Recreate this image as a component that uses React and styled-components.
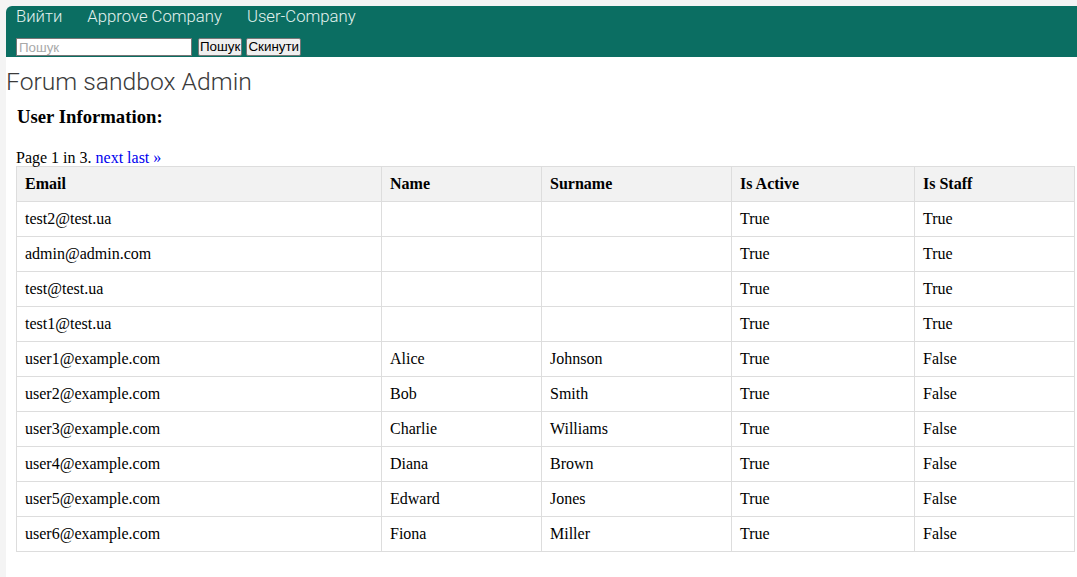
import React from "react";
import styled, { createGlobalStyle } from "styled-components";

const Global = createGlobalStyle`
  html, body { margin: 0; padding: 0; }
  body {
    background: #f4f4f4;
    font-family: "Liberation Serif", "Times New Roman", serif;
    color: #000;
  }
`;

const Page = styled.div`
  margin: 6px 0 0 6px;
  min-height: 571px;
  background: #fff;
  border-top-left-radius: 6px;
  overflow: hidden;
`;

const Header = styled.header`
  background: #0b6e62;
  padding: 0 10px 1px;
`;

const Nav = styled.nav`
  display: flex;
  gap: 25px;
  height: 31px;
  align-items: flex-start;
  padding-top: 1px;
`;

const NavLink = styled.a`
  font-family: Roboto, "Liberation Sans", sans-serif;
  font-size: 16.7px;
  font-weight: 300;
  line-height: 20px;
  color: #e3f2ef;
  text-decoration: none;
`;

const SearchRow = styled.form`
  display: flex;
  align-items: center;
  height: 18px;
  margin: 0;
`;

const SearchInput = styled.input`
  box-sizing: border-box;
  width: 176px;
  height: 18px;
  margin: 0 6px 0 0;
  padding: 0 2px;
  border: 1px solid #767676;
  border-radius: 0;
  background: #fff;
  font-family: "Liberation Sans", Arial, sans-serif;
  font-size: 13.33px;
  &::placeholder { color: #a9a9a9; }
`;

const Button = styled.button`
  box-sizing: border-box;
  height: 18px;
  margin: 0 4px 0 0;
  padding: 0 1px;
  border: 1px solid #767676;
  border-radius: 2px;
  background: #efefef;
  color: #000;
  font-family: "Liberation Sans", Arial, sans-serif;
  font-size: 13.4px;
  line-height: 14px;
`;

const Title = styled.h1`
  margin: 11px 0 0 0;
  font-family: Roboto, "Liberation Sans", sans-serif;
  font-weight: 300;
  font-size: 24.7px;
  line-height: 28px;
  color: #3a3a3a;
`;

const Content = styled.main`
  padding: 0 3px 0 10px;
`;

const Heading = styled.h3`
  margin: 10px 0 22px 1px;
  font-size: 18.72px;
  line-height: 21px;
  font-weight: bold;
`;

const Pager = styled.div`
  font-size: 16px;
  line-height: 18px;
  margin-bottom: -1px;
`;

const PagerLink = styled.a`
  color: #0000ee;
  text-decoration: none;
`;

const Table = styled.table`
  width: 1058px;
  table-layout: fixed;
  border-collapse: collapse;
  font-size: 16px;
`;

const Th = styled.th`
  background: #f2f2f2;
  border: 1px solid #ddd;
  padding: 8px;
  text-align: left;
  font-weight: bold;
  line-height: 18px;
`;

const Td = styled.td`
  border: 1px solid #ddd;
  padding: 8px;
  text-align: left;
  line-height: 18px;
  height: 18px;
`;

const cols = [365, 160, 190, 183, 160];

const users = [
  ["test2@test.ua", "", "", "True", "True"],
  ["admin@admin.com", "", "", "True", "True"],
  ["test@test.ua", "", "", "True", "True"],
  ["test1@test.ua", "", "", "True", "True"],
  ["user1@example.com", "Alice", "Johnson", "True", "False"],
  ["user2@example.com", "Bob", "Smith", "True", "False"],
  ["user3@example.com", "Charlie", "Williams", "True", "False"],
  ["user4@example.com", "Diana", "Brown", "True", "False"],
  ["user5@example.com", "Edward", "Jones", "True", "False"],
  ["user6@example.com", "Fiona", "Miller", "True", "False"],
];

export default function App() {
  return (
    <>
      <Global />
      <Page>
        <Header>
          <Nav>
            <NavLink href="#">Вийти</NavLink>
            <NavLink href="#">Approve Company</NavLink>
            <NavLink href="#">User-Company</NavLink>
          </Nav>
          <SearchRow onSubmit={(e) => e.preventDefault()}>
            <SearchInput placeholder="Пошук" />
            <Button type="submit">Пошук</Button>
            <Button type="button">Скинути</Button>
          </SearchRow>
        </Header>
        <Title>Forum sandbox Admin</Title>
        <Content>
          <Heading>User Information:</Heading>
          <Pager>
            Page 1 in 3. <PagerLink href="#">next</PagerLink>{" "}
            <PagerLink href="#">last »</PagerLink>
          </Pager>
          <Table>
            <colgroup>
              {cols.map((w, i) => (
                <col key={i} style={{ width: w }} />
              ))}
            </colgroup>
            <thead>
              <tr>
                <Th>Email</Th>
                <Th>Name</Th>
                <Th>Surname</Th>
                <Th>Is Active</Th>
                <Th>Is Staff</Th>
              </tr>
            </thead>
            <tbody>
              {users.map((u) => (
                <tr key={u[0]}>
                  {u.map((c, i) => (
                    <Td key={i}>{c}</Td>
                  ))}
                </tr>
              ))}
            </tbody>
          </Table>
        </Content>
      </Page>
    </>
  );
}
